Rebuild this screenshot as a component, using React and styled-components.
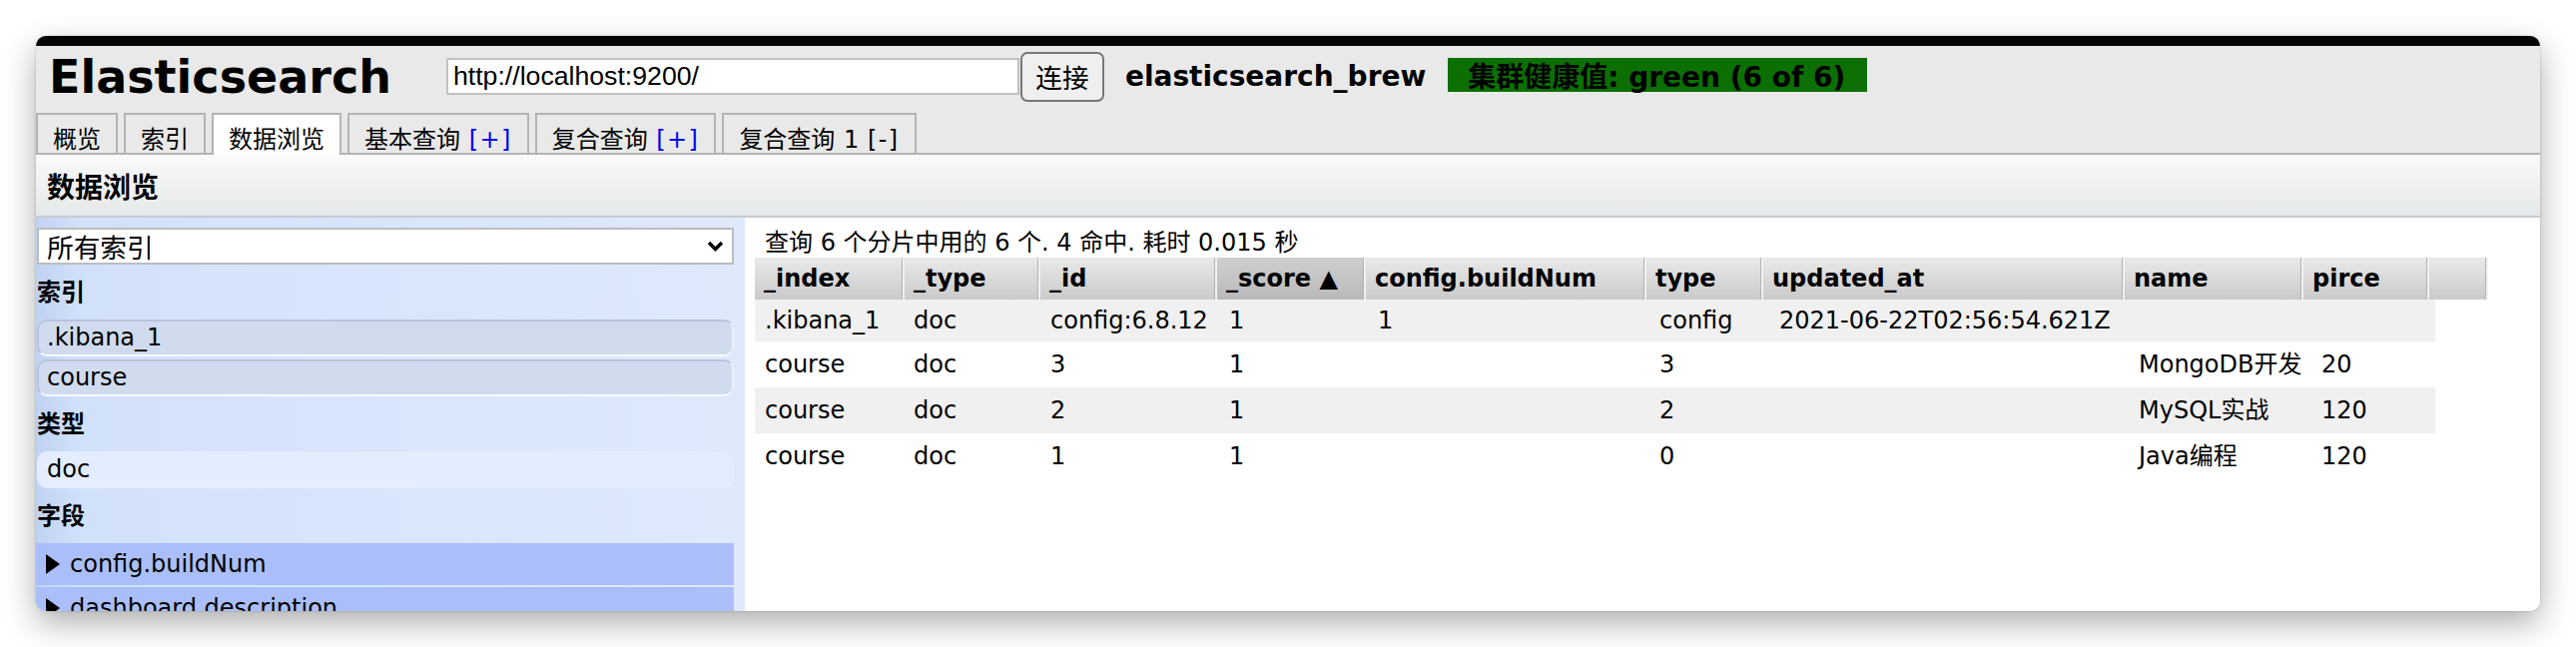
import React from 'react';
import styled, { createGlobalStyle } from 'styled-components';

const GlobalStyle = createGlobalStyle`
  html, body { margin: 0; padding: 0; background: #fff; }
  body {
    font-family: "DejaVu Sans", "Noto Sans CJK SC", sans-serif;
    font-size: 24px;
    color: #000;
  }
`;

const Page = styled.div`
  width: 2580px;
  height: 648px;
  padding: 36px;
  box-sizing: border-box;
  overflow: hidden;
`;

const Window = styled.div`
  width: 2508px;
  height: 576px;
  border-radius: 10px;
  overflow: hidden;
  background: #fff;
  box-shadow: 0 12px 32px rgba(0, 0, 0, 0.32), 0 0 2px rgba(0, 0, 0, 0.25);
  display: flex;
  flex-direction: column;
`;

const TitleBar = styled.div`
  height: 10px;
  flex: none;
  background: #050505;
`;

const Header = styled.div`
  flex: none;
  background: #e9e9e9;
`;

const TopRow = styled.div`
  height: 61px;
  display: flex;
  align-items: center;
  padding-left: 13px;
`;

const Brand = styled.h1`
  margin: 0 55px 0 0;
  font-size: 46px;
  line-height: 1;
  font-weight: bold;
`;

const UrlInput = styled.div`
  width: 574px;
  height: 37px;
  box-sizing: border-box;
  border: 2px solid #c1c1c1;
  background: #fff;
  padding: 0 5px;
  display: flex;
  align-items: center;
  font-family: "Liberation Sans", Arial, sans-serif;
  font-size: 26.67px;
`;

const ConnectButton = styled.div`
  width: 84px;
  height: 50px;
  margin-left: 1px;
  box-sizing: border-box;
  border: 2px solid #777;
  border-radius: 7px;
  background: #efefef;
  display: flex;
  align-items: center;
  justify-content: center;
  font-family: "Noto Sans CJK SC", sans-serif;
  font-size: 26.67px;
`;

const ClusterName = styled.span`
  margin-left: 21px;
  font-size: 28px;
  font-weight: bold;
`;

const Health = styled.div`
  margin-left: 22px;
  align-self: flex-start;
  margin-top: 12px;
  height: 34px;
  padding: 0 22px 0 20px;
  background: #0b6f02;
  display: flex;
  align-items: center;
  font-size: 28px;
  font-weight: bold;
`;

const Tabs = styled.div`
  margin-top: 6px;
  height: 40px;
  display: flex;
  align-items: flex-end;
  gap: 6px;
  border-bottom: 2px solid #b4b4b4;
`;

const Tab = styled.div`
  height: ${p => (p.$active ? 42 : 40)}px;
  margin-bottom: ${p => (p.$active ? -2 : 0)}px;
  box-sizing: border-box;
  border: 2px solid #b4b4b4;
  border-bottom: none;
  padding: 13px 15px 0;
  line-height: 24px;
  word-spacing: 1px;
  background: ${p => (p.$active ? '#fff' : '#e9e9e9')};
  white-space: nowrap;
`;

const Bracket = styled.span`
  color: ${p => (p.$blue ? '#0000f0' : '#000')};
  letter-spacing: 1.4px;
`;

const Heading = styled.div`
  flex: none;
  height: 61px;
  border-bottom: 2px solid #c9ccd0;
  background: linear-gradient(#f9fafa, #e5e8ea);
  display: flex;
  align-items: center;
  padding-left: 11px;
  font-size: 28px;
  font-weight: bold;
`;

const Main = styled.div`
  flex: 1;
  min-height: 0;
  display: flex;
`;

const Sidebar = styled.div`
  width: 710px;
  flex: none;
  box-sizing: border-box;
  padding: 10px 11px 0 1px;
  overflow: hidden;
  background: linear-gradient(to right, #c0d2f2 0%, #d2e1fa 6%, #dae6fc 60%, #dee9fc 100%);
`;

const IndexSelect = styled.div`
  height: 37px;
  box-sizing: border-box;
  border: 2px solid #bdbdbd;
  background: #fff;
  display: flex;
  align-items: center;
  justify-content: space-between;
  padding: 0 8px 0 8px;
  font-family: "Noto Sans CJK SC", sans-serif;
  font-size: 26.67px;
`;

const Label = styled.div`
  height: 36px;
  line-height: 36px;
  margin: 10px 0 9px;
  font-weight: bold;
`;

const Chip = styled.div`
  height: 37px;
  box-sizing: border-box;
  margin-bottom: 3px;
  border-radius: 10px;
  border: 2px solid;
  border-color: ${p => (p.$selected ? '#b7c4dd #e9eef8 #f6f9fe #b7c4dd' : 'transparent')};
  background: ${p => (p.$selected ? '#d0dbed' : '#e3edfd')};
  padding-left: 8px;
  line-height: 33px;
`;

const FieldRow = styled.div`
  height: 42px;
  margin: 0 0 2px -1px;
  background: #aabff9;
  display: flex;
  align-items: center;
  gap: 10px;
  padding-left: 10px;
  white-space: nowrap;
`;

const Content = styled.div`
  flex: 1;
  background: #fff;
  padding: 11px 0 0 10px;
  overflow: hidden;
`;

const Summary = styled.div`
  height: 29px;
  line-height: 29px;
  padding-left: 10px;
  white-space: nowrap;
`;

const headCols = '150px 136px 177px 149px 281px 117px 362px 179px 126px 59px';
const bodyCols = '149px 137px 179px 149px 282px 120px 360px 183px 124px';

const HeadRow = styled.div`
  display: grid;
  grid-template-columns: ${headCols};
  width: max-content;
`;

const HeadCell = styled.div`
  height: 42px;
  box-sizing: border-box;
  padding-left: 9px;
  display: flex;
  align-items: center;
  font-weight: bold;
  white-space: nowrap;
  overflow: hidden;
  border-right: 2px solid #f1f1f1;
  box-shadow: inset -1px 0 #b3b3b3;
  background: ${p =>
    p.$sorted ? 'linear-gradient(#cfcfcf, #b9b9b9)' : 'linear-gradient(#e9e9e9, #cacaca)'};
`;

const BodyRow = styled.div`
  display: grid;
  grid-template-columns: ${bodyCols};
  width: max-content;
  height: ${p => (p.$first ? 42 : 46)}px;
  align-items: center;
  background: ${p => (p.$odd ? '#f0f0f0' : '#fff')};
`;

const Cell = styled.div`
  line-height: 30px;
  padding-left: 10px;
  white-space: nowrap;
  overflow: hidden;
`;

const columns = ['_index', '_type', '_id', '_score ▲', 'config.buildNum', 'type', 'updated_at', 'name', 'pirce', ''];

const rows = [
  ['.kibana_1', 'doc', 'config:6.8.12', '1', '1', 'config', '2021-06-22T02:56:54.621Z', '', ''],
  ['course', 'doc', '3', '1', '', '3', '', 'MongoDB开发', '20'],
  ['course', 'doc', '2', '1', '', '2', '', 'MySQL实战', '120'],
  ['course', 'doc', '1', '1', '', '0', '', 'Java编程', '120'],
];

const Arrow = () => (
  <svg width="14" height="20" viewBox="0 0 14 20">
    <polygon points="0,0 14,10 0,20" fill="#000" />
  </svg>
);

const Chevron = () => (
  <svg width="17" height="11" viewBox="0 0 17 11">
    <polyline points="2,2 8.5,8.5 15,2" fill="none" stroke="#000" strokeWidth="3.4" />
  </svg>
);

export default function App() {
  return (
    <Page>
      <GlobalStyle />
      <Window>
        <TitleBar />
        <Header>
          <TopRow>
            <Brand>Elasticsearch</Brand>
            <UrlInput>http://localhost:9200/</UrlInput>
            <ConnectButton>连接</ConnectButton>
            <ClusterName>elasticsearch_brew</ClusterName>
            <Health>集群健康值: green (6 of 6)</Health>
          </TopRow>
          <Tabs>
            <Tab>概览</Tab>
            <Tab>索引</Tab>
            <Tab $active>数据浏览</Tab>
            <Tab>基本查询 <Bracket $blue>[+]</Bracket></Tab>
            <Tab>复合查询 <Bracket $blue>[+]</Bracket></Tab>
            <Tab>复合查询 1 <Bracket>[-]</Bracket></Tab>
          </Tabs>
        </Header>
        <Heading>数据浏览</Heading>
        <Main>
          <Sidebar>
            <IndexSelect>
              <span>所有索引</span>
              <Chevron />
            </IndexSelect>
            <Label>索引</Label>
            <Chip $selected>.kibana_1</Chip>
            <Chip $selected>course</Chip>
            <Label>类型</Label>
            <Chip>doc</Chip>
            <Label>字段</Label>
            <FieldRow><Arrow />config.buildNum</FieldRow>
            <FieldRow><Arrow />dashboard.description</FieldRow>
          </Sidebar>
          <Content>
            <Summary>查询 6 个分片中用的 6 个. 4 命中. 耗时 0.015 秒</Summary>
            <HeadRow>
              {columns.map((c, i) => (
                <HeadCell key={i} $sorted={i === 3}>{c}</HeadCell>
              ))}
            </HeadRow>
            {rows.map((r, i) => (
              <BodyRow key={i} $odd={i % 2 === 0} $first={i === 0}>
                {r.map((v, j) => (
                  <Cell key={j}>{v}</Cell>
                ))}
              </BodyRow>
            ))}
          </Content>
        </Main>
      </Window>
    </Page>
  );
}
